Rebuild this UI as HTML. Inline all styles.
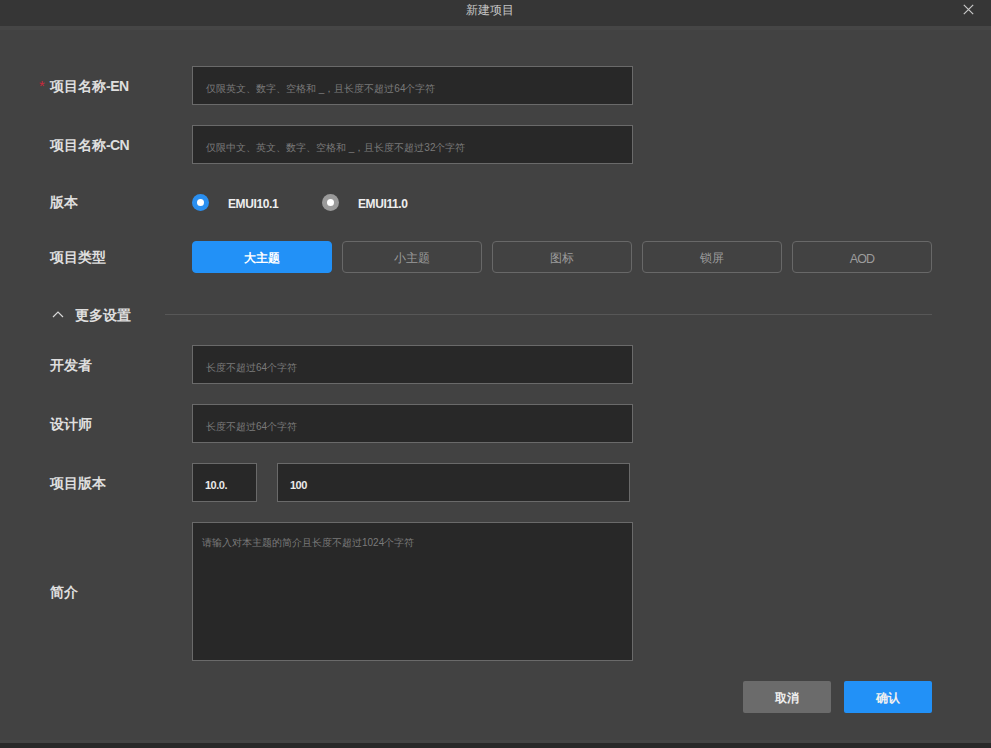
<!DOCTYPE html>
<html><head><meta charset="utf-8">
<style>
*{box-sizing:border-box;margin:0;padding:0}
html,body{width:991px;height:748px;overflow:hidden;background:#424242;font-family:"Liberation Sans",sans-serif;position:relative}
.abs{position:absolute}
.title{left:0;top:0;width:991px;height:26px;background:#363636}
.title .t{left:466px;top:2px;color:#c4c4c4;font-size:12px;line-height:16px}
.close{left:962px;top:3px;width:13px;height:13px}
.lbl{left:50px;color:#dedede;font-size:14px;font-weight:bold;line-height:18px;white-space:nowrap}
.req{left:39px;top:78px;color:#c8283c;font-size:15px;line-height:15px}
.inp{left:192px;width:441px;height:39px;background:#282828;border:1px solid #6a6a6a}
.ph{left:13px;color:#7a7a7a;font-size:10px;line-height:12px;white-space:nowrap}
.radio{width:17px;height:17px;border-radius:50%}
.radio i{position:absolute;left:5px;top:5px;width:7px;height:7px;border-radius:50%;background:#fff}
.rt{color:#eeeeee;font-size:12px;font-weight:bold;line-height:14px;letter-spacing:-0.4px}
.btn{top:241px;width:140px;height:32px;border:1px solid #686868;border-radius:4px;color:#9c9c9c;font-size:12px;line-height:32px;text-align:center}
.btn.on{background:#2291f7;border-color:#2291f7;color:#fff;font-weight:bold}
.sep{left:165px;top:314px;width:767px;height:1px;background:#575757}
.val{color:#eaeaea;font-size:11px;font-weight:bold;line-height:14px;letter-spacing:-0.5px}
.fb{top:681px;width:88px;height:32px;border-radius:2px;color:#f0f0f0;font-size:12px;font-weight:bold;line-height:34px;text-align:center}
.bottom{left:0;top:743px;width:991px;height:5px;background:#2a2a2a}
</style></head><body>
<div class="abs title"><div class="abs t">新建项目</div>
<svg class="abs close" viewBox="0 0 13 13"><path d="M1.8 1.8L11.2 11.2M11.2 1.8L1.8 11.2" stroke="#c8c8c8" stroke-width="1.2" fill="none"/></svg>
</div>

<div class="abs req">*</div>
<div class="abs lbl" style="top:77px">项目名称<span style="letter-spacing:-0.5px">-EN</span></div>
<div class="abs inp" style="top:66px"><div class="abs ph" style="top:16px">仅限英文、数字、空格和 _，且长度不超过64个字符</div></div>

<div class="abs lbl" style="top:136px">项目名称<span style="letter-spacing:-0.6px">-CN</span></div>
<div class="abs inp" style="top:125px"><div class="abs ph" style="top:16px">仅限中文、英文、数字、空格和 _，且长度不超过32个字符</div></div>

<div class="abs lbl" style="top:193px">版本</div>
<div class="abs radio" style="left:192px;top:194px;background:#2a8ff0"><i></i></div>
<div class="abs rt" style="left:228px;top:197px">EMUI10.1</div>
<div class="abs radio" style="left:322px;top:194px;background:#9a9a9a"><i></i></div>
<div class="abs rt" style="left:358px;top:197px">EMUI11.0</div>

<div class="abs lbl" style="top:248px">项目类型</div>
<div class="abs btn on" style="left:192px">大主题</div>
<div class="abs btn" style="left:342px">小主题</div>
<div class="abs btn" style="left:492px">图标</div>
<div class="abs btn" style="left:642px">锁屏</div>
<div class="abs btn" style="left:792px"><span style="position:relative;top:1px;letter-spacing:-0.8px;font-size:12.5px">AOD</span></div>

<svg class="abs" style="left:52px;top:310px" width="12" height="9" viewBox="0 0 12 9"><path d="M1 7L6 2L11 7" stroke="#d8d8d8" stroke-width="1.2" fill="none"/></svg>
<div class="abs lbl" style="left:75px;top:306px">更多设置</div>
<div class="abs sep"></div>

<div class="abs lbl" style="top:356px">开发者</div>
<div class="abs inp" style="top:345px"><div class="abs ph" style="top:16px">长度不超过64个字符</div></div>

<div class="abs lbl" style="top:415px">设计师</div>
<div class="abs inp" style="top:404px"><div class="abs ph" style="top:16px">长度不超过64个字符</div></div>

<div class="abs lbl" style="top:474px">项目版本</div>
<div class="abs inp" style="top:463px;width:65px"><div class="abs val" style="left:12px;top:14px">10.0.</div></div>
<div class="abs inp" style="top:463px;left:277px;width:353px"><div class="abs val" style="left:12px;top:14px">100</div></div>

<div class="abs lbl" style="top:583px">简介</div>
<div class="abs inp" style="top:522px;height:139px"><div class="abs ph" style="left:9px;top:14px">请输入对本主题的简介且长度不超过1024个字符</div></div>

<div class="abs fb" style="left:743px;background:#6b6b6b">取消</div>
<div class="abs fb" style="left:844px;background:#2291f7">确认</div>

<div class="abs" style="left:0;top:740px;width:991px;height:3px;background:#464646"></div>
<div class="abs bottom"></div>
<div class="abs" style="left:0;top:26px;width:991px;height:4px;background:#464646"></div>
</body></html>
